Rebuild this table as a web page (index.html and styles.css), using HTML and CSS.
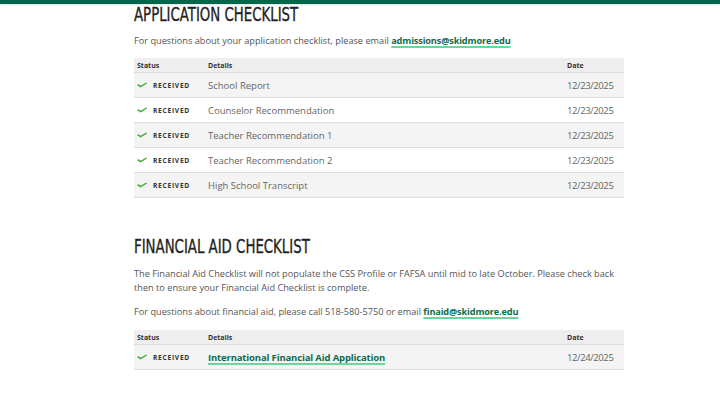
FILE: index.html
```html
<!DOCTYPE html>
<html>
<head>
<meta charset="utf-8">
<link rel="stylesheet" href="styles.css">
</head>
<body>
<div class="topbar"></div>
<main class="content">
  <section class="block">
    <h2 class="title">APPLICATION CHECKLIST</h2>
    <p class="note">For questions about your application checklist, please email <a class="link" href="#">admissions@skidmore.edu</a></p>
    <table class="checklist">
      <thead>
        <tr><th class="c-status">Status</th><th class="c-detail">Details</th><th class="c-date">Date</th></tr>
      </thead>
      <tbody>
        <tr><td class="c-status"><span class="ok"><svg class="chk" viewBox="0 0 10 6" width="10" height="6"><path d="M0.6 2.6 L3.6 4.7 L9.6 1" fill="none" stroke="#45a83a" stroke-width="1.45" stroke-linejoin="round"/></svg>RECEIVED</span></td><td class="c-detail">School Report</td><td class="c-date">12/23/2025</td></tr>
        <tr><td class="c-status"><span class="ok"><svg class="chk" viewBox="0 0 10 6" width="10" height="6"><path d="M0.6 2.6 L3.6 4.7 L9.6 1" fill="none" stroke="#45a83a" stroke-width="1.45" stroke-linejoin="round"/></svg>RECEIVED</span></td><td class="c-detail">Counselor Recommendation</td><td class="c-date">12/23/2025</td></tr>
        <tr><td class="c-status"><span class="ok"><svg class="chk" viewBox="0 0 10 6" width="10" height="6"><path d="M0.6 2.6 L3.6 4.7 L9.6 1" fill="none" stroke="#45a83a" stroke-width="1.45" stroke-linejoin="round"/></svg>RECEIVED</span></td><td class="c-detail">Teacher Recommendation 1</td><td class="c-date">12/23/2025</td></tr>
        <tr><td class="c-status"><span class="ok"><svg class="chk" viewBox="0 0 10 6" width="10" height="6"><path d="M0.6 2.6 L3.6 4.7 L9.6 1" fill="none" stroke="#45a83a" stroke-width="1.45" stroke-linejoin="round"/></svg>RECEIVED</span></td><td class="c-detail">Teacher Recommendation 2</td><td class="c-date">12/23/2025</td></tr>
        <tr><td class="c-status"><span class="ok"><svg class="chk" viewBox="0 0 10 6" width="10" height="6"><path d="M0.6 2.6 L3.6 4.7 L9.6 1" fill="none" stroke="#45a83a" stroke-width="1.45" stroke-linejoin="round"/></svg>RECEIVED</span></td><td class="c-detail">High School Transcript</td><td class="c-date">12/23/2025</td></tr>
      </tbody>
    </table>
  </section>
  <section class="block second">
    <h2 class="title">FINANCIAL AID CHECKLIST</h2>
    <p class="note">The Financial Aid Checklist will not populate the CSS Profile or FAFSA until mid to late October. Please check back then to ensure your Financial Aid Checklist is complete.</p>
    <p class="note">For questions about financial aid, please call 518-580-5750 or email <a class="link" href="#">finaid@skidmore.edu</a></p>
    <table class="checklist">
      <thead>
        <tr><th class="c-status">Status</th><th class="c-detail">Details</th><th class="c-date">Date</th></tr>
      </thead>
      <tbody>
        <tr><td class="c-status"><span class="ok"><svg class="chk" viewBox="0 0 10 6" width="10" height="6"><path d="M0.6 2.6 L3.6 4.7 L9.6 1" fill="none" stroke="#45a83a" stroke-width="1.45" stroke-linejoin="round"/></svg>RECEIVED</span></td><td class="c-detail"><a class="link" href="#">International Financial Aid Application</a></td><td class="c-date">12/24/2025</td></tr>
      </tbody>
    </table>
  </section>
</main>
</body>
</html>
```

FILE: styles.css
```css
html, body {
  margin: 0;
  padding: 0;
  background: #ffffff;
}
body {
  font-family: "Open Sans", "DejaVu Sans", sans-serif;
  color: #555555;
}
.topbar {
  height: 4px;
  background: #00674b;
  box-shadow: 0 1px 2px rgba(0,0,0,0.12);
}
.content {
  width: 490px;
  margin: 0 0 0 134px;
}
.title {
  margin: 0;
  padding: 0;
  font-family: "Liberation Sans Narrow", "DejaVu Sans Condensed", sans-serif;
  font-weight: normal;
  font-size: 20px;
  line-height: 21px;
  letter-spacing: 0;
  color: #222222;
  -webkit-text-stroke: 0.35px #222222;
  transform: scaleX(0.74);
  transform-origin: left center;
  white-space: nowrap;
}
.note {
  margin: 9px 0 0;
  font-size: 9.2px;
  line-height: 14px;
  color: #555555;
}
.note + .note {
  margin-top: 10px;
}
.link {
  color: #0e6b4c;
  font-weight: bold;
  letter-spacing: -0.15px;
  text-decoration: underline;
  text-decoration-color: #6ad69a;
  text-decoration-thickness: 1.5px;
  text-underline-offset: 2px;
  text-decoration-skip-ink: none;
}
.checklist {
  width: 100%;
  border-collapse: collapse;
  margin-top: 10px;
}
.checklist th {
  background: #eeeeee;
  font-size: 7px;
  font-weight: bold;
  color: #333333;
  text-align: left;
  height: 14px;
  padding: 0;
  border-bottom: 1px solid #dddddd;
}
.checklist td {
  height: 24px;
  padding: 0;
  font-size: 9.5px;
  color: #666666;
  border-bottom: 1px solid #dddddd;
}
.checklist tbody tr:nth-child(odd) td {
  background: #f4f4f4;
}
.checklist .c-status {
  width: 71px;
  padding-left: 3px;
}
.checklist .c-date { width: 57px; }
.checklist td.c-date {
  letter-spacing: -0.4px;
}
.ok {
  display: flex;
  align-items: center;
  gap: 6px;
  font-size: 6.6px;
  font-weight: bold;
  letter-spacing: 0.75px;
  color: #333333;
}
.chk { display: block; }
.second {
  margin-top: 38px;
}
.second .note:first-of-type {
  margin-top: 10px;
}
.second .checklist {
  margin-top: 11px;
}
```
